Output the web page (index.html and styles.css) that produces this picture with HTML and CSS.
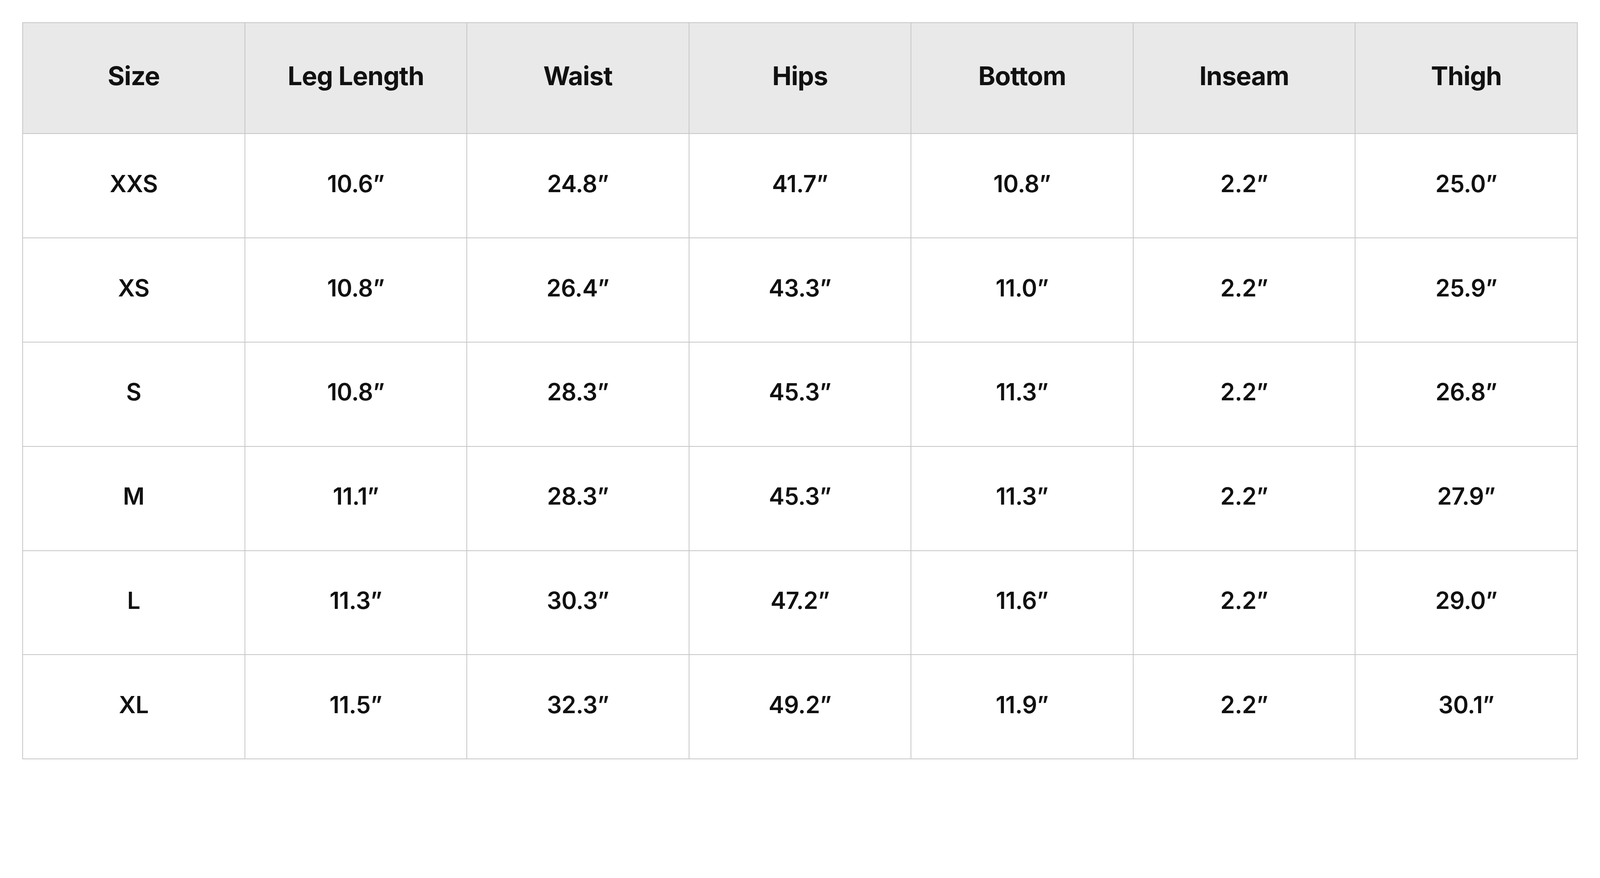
FILE: index.html
```html
<!DOCTYPE html>
<html lang="en">
<head>
<meta charset="utf-8">
<title>Size Chart</title>
<link rel="stylesheet" href="styles.css">
</head>
<body>
<table class="size-chart">
  <thead>
    <tr class="head-row">
      <th>Size</th><th>Leg Length</th><th>Waist</th><th>Hips</th><th>Bottom</th><th>Inseam</th><th>Thigh</th>
    </tr>
  </thead>
  <tbody>
    <tr><td>XXS</td><td>10.6”</td><td>24.8”</td><td>41.7”</td><td>10.8”</td><td>2.2”</td><td>25.0”</td></tr>
    <tr><td>XS</td><td>10.8”</td><td>26.4”</td><td>43.3”</td><td>11.0”</td><td>2.2”</td><td>25.9”</td></tr>
    <tr><td>S</td><td>10.8”</td><td>28.3”</td><td>45.3”</td><td>11.3”</td><td>2.2”</td><td>26.8”</td></tr>
    <tr><td>M</td><td>11.1”</td><td>28.3”</td><td>45.3”</td><td>11.3”</td><td>2.2”</td><td>27.9”</td></tr>
    <tr><td>L</td><td>11.3”</td><td>30.3”</td><td>47.2”</td><td>11.6”</td><td>2.2”</td><td>29.0”</td></tr>
    <tr><td>XL</td><td>11.5”</td><td>32.3”</td><td>49.2”</td><td>11.9”</td><td>2.2”</td><td>30.1”</td></tr>
  </tbody>
</table>
</body>
</html>
```
FILE: styles.css
```css
html, body {
  margin: 0;
  padding: 0;
  background: #ffffff;
}

body {
  padding: 57px;
  font-family: Inter, "Noto Sans", "Liberation Sans", sans-serif;
  color: #111111;
}

.size-chart {
  width: 100%;
  table-layout: fixed;
  border-collapse: collapse;
}

.size-chart th,
.size-chart td {
  border: 2px solid #c6c6c6;
  text-align: center;
  vertical-align: middle;
  padding: 0 0 12px;
}

.size-chart th {
  height: 270.4px;
  background: #e9e9e9;
  font-size: 66px;
  font-weight: 700;
  letter-spacing: -1px;
}

.size-chart td {
  height: 252.8px;
  font-size: 60px;
  font-weight: 600;
  letter-spacing: -0.5px;
}
```
